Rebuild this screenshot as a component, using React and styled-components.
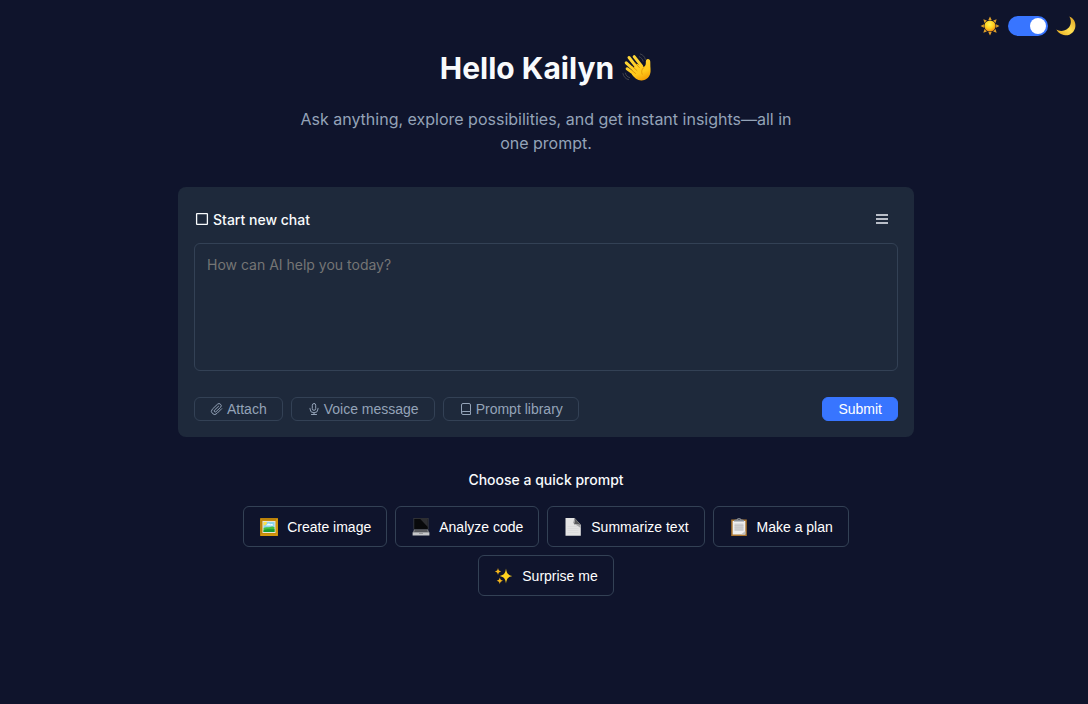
import { useState } from 'react';
import styled, { createGlobalStyle } from 'styled-components';

const COLOR_PAGE = '#0f142c';
const COLOR_CARD = '#1e293b';
const COLOR_BORDER = '#334155';
const COLOR_TEXT = '#f8fafc';
const COLOR_MUTED = '#94a3b8';
const COLOR_PRIMARY = '#3875ff';

const GlobalStyle = createGlobalStyle`
  * {
    box-sizing: border-box;
  }

  body {
    margin: 0;
    background-color: ${COLOR_PAGE};
    color: ${COLOR_TEXT};
    font-family: Inter, sans-serif;
    font-size: 14px;
  }
`;

function SunIcon() {
  return (
    <svg width="20" height="20" viewBox="0 0 20 20" aria-hidden="true">
      <defs>
        <radialGradient id="sun" cx="0.45" cy="0.35" r="0.65">
          <stop offset="0" stopColor="#fff25a" />
          <stop offset="0.55" stopColor="#ffd21f" />
          <stop offset="1" stopColor="#f08a12" />
        </radialGradient>
      </defs>
      <g fill="#dfa02a">
        {[0, 45, 90, 135, 180, 225, 270, 315].map((angle) => (
          <path key={angle} d="M10 .6 11.7 3.900H8.300Z" transform={`rotate(${angle} 10 10)`} />
        ))}
      </g>
      <circle cx="10" cy="10" r="5.6" fill="url(#sun)" />
    </svg>
  );
}

function MoonIcon() {
  return (
    <svg width="20" height="20" viewBox="0 0 20 20" aria-hidden="true">
      <defs>
        <linearGradient id="moon" x1="0" y1="1" x2="1" y2="0">
          <stop offset="0" stopColor="#e8a91c" />
          <stop offset="0.5" stopColor="#ffdf52" />
          <stop offset="1" stopColor="#d99a1c" />
        </linearGradient>
      </defs>
      <path d="M13.3.4C17.4 2 19.8 5.800 19.4 10.200 18.900 15.600 14.600 19.600 9.300 19.300 5.100 19 1.700 16.500.4 13.600 3 15.400 8.400 15.700 12 12.300 15.300 9.200 15.700 4 13.300.4Z" fill="url(#moon)" />
    </svg>
  );
}

function WaveIcon() {
  return (
    <svg width="30" height="30" viewBox="0 0 32 32" aria-hidden="true">
      <defs>
        <linearGradient id="wave" gradientUnits="userSpaceOnUse" x1="10" y1="3" x2="22" y2="30">
          <stop offset="0" stopColor="#ffd83a" />
          <stop offset="0.7" stopColor="#ffc81a" />
          <stop offset="1" stopColor="#f29b04" />
        </linearGradient>
      </defs>
      <g fill="none" stroke="url(#wave)" strokeWidth="3.2" strokeLinecap="round">
        <path d="M13 3.800 21 14" />
        <path d="M7.500 4.800 17 17" />
        <path d="M4.500 10.500 15 20" />
        <path d="M5.500 16.800 14 23" />
      </g>
      <path d="M16 11.500 22 14.600C24.200 15.300 25.600 13.200 25.400 10.500 25.200 8 26 6.400 27.900 6.500 29.800 6.600 30.400 8.500 30.200 11.500 30 15 31.200 19.500 29.800 23 28.300 26.900 24.400 29.600 20.500 29.300 16.500 29 13 26.200 10.500 22.800L11.500 17Z" fill="url(#wave)" />
      <g fill="none" stroke="#d98a00" strokeWidth="0.8" strokeLinecap="round">
        <path d="M13.500 10 18.500 15.500M11 14.200 16 18.800M10.500 18.600 14.500 21.800" />
        <path d="M23.500 15.300C20.800 17.300 20.500 20 21.500 22.500" />
      </g>
      <g fill="none" stroke="#44464f" strokeWidth="1" strokeLinecap="round">
        <path d="M18.500 4C20.600 4.900 22 6.500 22.500 8.800M19.500 1C22.500 2 24.300 4 24.900 6.700" />
        <path d="M3.600 21.500C4.200 24 5.600 25.500 8 26.200M1 22C1.800 25.500 4 27.800 7 28.400" />
      </g>
    </svg>
  );
}

function SquareIcon() {
  return (
    <svg width="16" height="16" viewBox="0 0 16 16" fill="none" stroke="currentColor" aria-hidden="true">
      <rect x="2.600" y="2.600" width="10.800" height="10.800" rx="0.500" strokeWidth="1.300" />
    </svg>
  );
}

function MenuIcon() {
  return (
    <svg width="16" height="16" viewBox="0 0 16 16" fill="currentColor" aria-hidden="true">
      <path d="M2 3H14V5H2ZM2 7H14V9H2ZM2 11H14V13H2Z" />
    </svg>
  );
}

function AttachIcon() {
  return (
    <svg width="14" height="14" viewBox="0 0 14 14" fill="none" stroke="currentColor" strokeLinecap="round" aria-hidden="true">
      <path d="M11.700 6.700 7 11.400A3 3 0 0 1 2.300 7.200L7.500 2.200A2.200 2.200 0 0 1 10.700 5.200L6 9.700A1.100 1.100 0 0 1 4.400 8.200L8.600 4.200" />
    </svg>
  );
}

function MicIcon() {
  return (
    <svg width="14" height="14" viewBox="0 0 14 14" fill="none" stroke="currentColor" strokeLinecap="round" aria-hidden="true">
      <rect x="5.300" y="1.500" width="3.400" height="6.800" rx="1.700" />
      <path d="M3 6.300V6.800A4 4 0 0 0 11 6.800V6.300M7 10.800V12.500M4.500 12.500H9.500" />
    </svg>
  );
}

function BookIcon() {
  return (
    <svg width="14" height="14" viewBox="0 0 14 14" fill="none" stroke="currentColor" aria-hidden="true">
      <path d="M11.500 9.500V3A1.500 1.500 0 0 0 10 1.500H4A1.500 1.500 0 0 0 2.500 3V11A1.500 1.500 0 0 0 4 12.500H11.500V9.500H4A1.500 1.500 0 0 0 2.500 11" />
    </svg>
  );
}

function PictureIcon() {
  return (
    <svg width="20" height="20" viewBox="0 0 20 20" aria-hidden="true">
      <path d="M1 1H19V19H1Z" fill="#c78a08" />
      <path d="M1 1H19L17 3H3V17L1 19Z" fill="#a46c05" />
      <path d="M2 2H18V18H2Z" fill="none" stroke="#e5ac19" strokeWidth="0.7" />
      <path d="M3.500 4H16.500V16H3.500Z" fill="#e5e6d9" />
      <path d="M4.500 5H15.500V11H4.500Z" fill="#8cd5ee" />
      <path d="M4.500 5H8C8 7.300 6.700 8.300 4.500 8.400Z" fill="#ffe047" />
      <path d="M8 7.500C9 6.200 10.500 6.200 11.300 7.400 13 6.700 14 7.400 14.300 8.500H7Z" fill="#eefbff" />
      <path d="M4.500 11C7 9.300 9 10.800 11 10 13 9 14 9.400 15.500 10.300V15H4.500Z" fill="#43bf3c" />
      <path d="M4.500 13.400C8 11.300 11 12.600 15.500 12V15H4.500Z" fill="#179b32" />
    </svg>
  );
}

function LaptopIcon() {
  return (
    <svg width="20" height="20" viewBox="0 0 20 20" aria-hidden="true">
      <path d="M2.500 1H17.500V12.500H2.500Z" fill="#3f4045" />
      <path d="M3.200 1.700H16.800V12H3.200Z" fill="#08090b" />
      <path d="M9 1.700H16.800V10Z" fill="#2d2e32" />
      <path d="M3 12.500H17L18.400 16H1.600Z" fill="#77797d" />
      <path d="M4 13.200H16M3.500 14.400H16.500" stroke="#36373c" strokeWidth="0.6" />
      <path d="M1.600 15.500H18.400V18.500H1.600Z" fill="#c5c6c8" />
      <path d="M8 15.500H12V17H8Z" fill="#98999c" />
    </svg>
  );
}

function PageIcon() {
  return (
    <svg width="20" height="20" viewBox="0 0 20 20" aria-hidden="true">
      <path d="M2.500 1H11.500L17.800 8V18.800H2.500Z" fill="#e4e4e4" />
      <path d="M11.500 1 17.800 8V11L10 6Z" fill="#a7a7a9" />
      <path d="M11.500 1C12.200 4 12 5.600 11 7.400 13.500 6.800 16 7 17.800 8Z" fill="#58595c" />
      <path d="M4.500 9.500H14M4.500 11.500H15.500M4.500 13.500H15.500M4.500 15.500H15.500" stroke="#d4d4d6" strokeWidth="0.5" />
    </svg>
  );
}

function ClipboardIcon() {
  return (
    <svg width="20" height="20" viewBox="0 0 20 20" aria-hidden="true">
      <path d="M2.200 2.500H17.800V19H2.200Z" fill="#ac762f" />
      <path d="M3.700 4H16.300V17.500H3.700Z" fill="#efefef" />
      <path d="M5.500 6.500H14.500V14H5.500Z" fill="#d0d1d3" />
      <path d="M5.500 8.500H14.500M5.500 10.300H14.500M5.500 12.100H14.500" stroke="#bfc0c3" strokeWidth="0.6" />
      <path d="M12 17.500 16.300 14V17.500Z" fill="#bfc0c2" />
      <path d="M5 4.500V3L8 2.200C8.500.6 11.500.6 12 2.200L15 3V4.500Z" fill="#8a9098" />
      <circle cx="10" cy="2.200" r="0.7" fill="#303440" />
    </svg>
  );
}

function SparklesIcon() {
  return (
    <svg width="20" height="20" viewBox="0 0 20 20" aria-hidden="true">
      <path d="M12 2.500C12.800 7.600 13.900 8.900 18.300 10 13.900 11.100 12.800 12.400 12 17.500 11.200 12.400 10.100 11.100 5.700 10 10.100 8.900 11.200 7.600 12 2.500Z" fill="#ffd21e" />
      <path d="M4 2C4.500 4.400 5.100 5 7.200 5.500 5.100 6 4.500 6.600 4 9 3.500 6.600 2.900 6 .8 5.500 2.900 5 3.500 4.400 4 2Z" fill="#f4b51c" />
      <path d="M5.800 11.500C6.300 13.600 6.900 14.200 9 14.700 6.900 15.200 6.300 15.800 5.800 17.900 5.300 15.800 4.700 15.200 2.600 14.700 4.700 14.200 5.300 13.600 5.800 11.500Z" fill="#f4b51c" />
    </svg>
  );
}

const TOOLS = [
  { label: 'Attach', Icon: AttachIcon },
  { label: 'Voice message', Icon: MicIcon },
  { label: 'Prompt library', Icon: BookIcon },
];

const PROMPTS = [
  { label: 'Create image', Icon: PictureIcon },
  { label: 'Analyze code', Icon: LaptopIcon },
  { label: 'Summarize text', Icon: PageIcon },
  { label: 'Make a plan', Icon: ClipboardIcon },
  { label: 'Surprise me', Icon: SparklesIcon },
];

function App() {
  const [dark, setDark] = useState(true);
  const [message, setMessage] = useState('');

  return (
    <Page>
      <GlobalStyle />
      <ThemeBar>
        <SunIcon />
        <Switch
          type="checkbox"
          role="switch"
          aria-label="Dark mode"
          checked={dark}
          onChange={(e) => setDark(e.target.checked)}
        />
        <MoonIcon />
      </ThemeBar>
      <Content>
        <Title>
          Hello Kailyn
          <WaveIcon />
        </Title>
        <Subtitle>
          Ask anything, explore possibilities, and get instant insights—all in one prompt.
        </Subtitle>
        <Card>
          <CardHeader>
            <CardLabel htmlFor="message">
              <SquareIcon />
              Start new chat
            </CardLabel>
            <MenuButton type="button" aria-label="Menu">
              <MenuIcon />
            </MenuButton>
          </CardHeader>
          <MessageBox
            id="message"
            placeholder="How can AI help you today?"
            value={message}
            onChange={(e) => setMessage(e.target.value)}
          />
          <CardFooter>
            <Tools>
              {TOOLS.map(({ label, Icon }) => (
                <ToolButton key={label} type="button">
                  <Icon />
                  {label}
                </ToolButton>
              ))}
            </Tools>
            <SubmitButton type="button">Submit</SubmitButton>
          </CardFooter>
        </Card>
        <PromptTitle>Choose a quick prompt</PromptTitle>
        <Prompts>
          {PROMPTS.map(({ label, Icon }) => (
            <PromptButton key={label} type="button">
              <Icon />
              {label}
            </PromptButton>
          ))}
        </Prompts>
      </Content>
    </Page>
  );
}

const Page = styled.div`
  min-height: 100vh;
  padding-left: 4px;
`;

const ThemeBar = styled.div`
  display: flex;
  align-items: center;
  justify-content: flex-end;
  gap: 8px;
  padding: 16px 12px 0;
`;

const Switch = styled.input`
  appearance: none;
  display: flex;
  align-items: center;
  justify-content: ${({ checked }) => (checked ? 'flex-end' : 'flex-start')};
  width: 40px;
  height: 20px;
  margin: 0;
  padding: 0 2px;
  border-radius: 10px;
  background-color: ${({ checked }) => (checked ? COLOR_PRIMARY : COLOR_BORDER)};
  cursor: pointer;

  &::before {
    content: '';
    width: 16px;
    height: 16px;
    border-radius: 50%;
    background-color: #fff;
  }
`;

const Content = styled.main`
  display: flex;
  flex-direction: column;
  align-items: center;
  max-width: 768px;
  margin: 0 auto;
  padding: 12px 16px;
`;

const Title = styled.h1`
  display: flex;
  align-items: center;
  gap: 8px;
  margin: 0;
  font-size: 30px;
  font-weight: 700;
  line-height: 40px;
`;

const Subtitle = styled.p`
  max-width: 512px;
  margin: 19px 0 32px;
  color: ${COLOR_MUTED};
  font-size: 16px;
  line-height: 24px;
  text-align: center;
`;

const Card = styled.section`
  width: 100%;
  padding: 16px;
  border-radius: 8px;
  background-color: ${COLOR_CARD};
`;

const CardHeader = styled.div`
  display: flex;
  align-items: center;
  justify-content: space-between;
  height: 32px;
  margin-bottom: 8px;
`;

const CardLabel = styled.label`
  display: flex;
  align-items: center;
  gap: 3px;
  font-weight: 500;
`;

const MenuButton = styled.button`
  display: flex;
  padding: 8px;
  border: 0;
  background: none;
  color: #b9bec8;
  cursor: pointer;
`;

const MessageBox = styled.textarea`
  display: block;
  width: 100%;
  height: 128px;
  padding: 11px 12px;
  border: 1px solid ${COLOR_BORDER};
  border-radius: 6px;
  background: none;
  color: ${COLOR_TEXT};
  font-family: inherit;
  font-size: 14px;
  line-height: 20px;
  resize: none;

  &::placeholder {
    color: #757575;
  }
`;

const CardFooter = styled.div`
  display: flex;
  align-items: center;
  justify-content: space-between;
  margin-top: 26px;
`;

const Tools = styled.div`
  display: flex;
  gap: 8px;
`;

const Button = styled.button`
  display: flex;
  align-items: center;
  border: 1px solid ${COLOR_BORDER};
  border-radius: 6px;
  background: none;
  font-family: 'Liberation Sans', Arial, sans-serif;
  font-size: 14px;
  cursor: pointer;
`;

const ToolButton = styled(Button)`
  gap: 3px;
  height: 24px;
  padding: 0 15px;
  color: ${COLOR_MUTED};
`;

const SubmitButton = styled(Button)`
  height: 24px;
  padding: 0 15px;
  border-color: ${COLOR_PRIMARY};
  background-color: ${COLOR_PRIMARY};
  color: #fff;
`;

const PromptTitle = styled.h2`
  margin: 33px 0 16px;
  font-size: 14px;
  font-weight: 500;
  line-height: 20px;
`;

const Prompts = styled.div`
  display: flex;
  flex-wrap: wrap;
  justify-content: center;
  gap: 8px;
  max-width: 640px;
`;

const PromptButton = styled(Button)`
  gap: 8px;
  height: 41px;
  padding: 0 15px;
  color: #fff;
`;

export default App;
